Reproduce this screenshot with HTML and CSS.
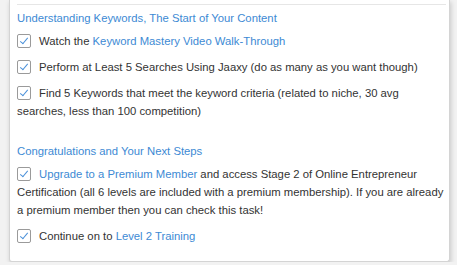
FILE: index.html
```html
<!DOCTYPE html>
<html lang="en">
<head>
  <meta charset="UTF-8" />
  <meta name="viewport" content="width=device-width, initial-scale=1.0" />
  <title>Training Tasks</title>
  <link rel="stylesheet" href="styles.css">
</head>
<body>
  <div class="popup">
    <div class="divider"></div>

    <div class="task-group">
      <div class="group-title">Understanding Keywords, The Start of Your Content</div>
      <div class="task"><span class="check"></span>Watch the <a href="#">Keyword Mastery Video Walk-Through</a></div>
      <div class="task"><span class="check"></span>Perform at Least 5 Searches Using Jaaxy (do as many as you want though)</div>
      <div class="task"><span class="check"></span>Find 5 Keywords that meet the keyword criteria (related to niche, 30 avg searches, less than 100 competition)</div>
    </div>

    <div class="task-group">
      <div class="group-title">Congratulations and Your Next Steps</div>
      <div class="task"><span class="check"></span><a href="#">Upgrade to a Premium Member</a> and access Stage 2 of Online Entrepreneur Certification (all 6 levels are included with a premium membership). If you are already a premium member then you can check this task!</div>
      <div class="task"><span class="check"></span>Continue on to <a href="#">Level 2 Training</a></div>
    </div>
  </div>
</body>
</html>
```

FILE: styles.css
```css
/* Base */
* {
  margin: 0;
  padding: 0;
  box-sizing: border-box;
}

body {
  background: #f2f2f2;
  font-family: 'Liberation Sans', Arial, sans-serif;
  font-size: 11.3px;
  line-height: 18px;
  color: #333;
  padding-left: 9px;
  overflow: hidden;
}

a {
  color: #3d8ad4;
  text-decoration: none;
}

/* Popup card */
.popup {
  width: 441px;
  background: #fff;
  border: 1px solid #d4d4d4;
  border-top: none;
  border-radius: 0 0 3px 3px;
  box-shadow: 1px 2px 5px rgba(0, 0, 0, 0.18);
  padding: 0 3px 16px 7px;
}

.divider {
  height: 5px;
  border-bottom: 1px solid #e6e6e6;
}

.task-group {
  padding-top: 4px;
}

.task-group + .task-group {
  padding-top: 22px;
}

.group-title {
  color: #3d8ad4;
  margin-bottom: 5px;
}

.task {
  margin-bottom: 8px;
}

.task:last-child {
  margin-bottom: 0;
}

/* Checked box */
.check {
  display: inline-block;
  position: relative;
  width: 14px;
  height: 14px;
  border: 1px solid #9a9a9a;
  border-radius: 2px;
  vertical-align: -3px;
  margin-right: 8px;
}

.check::after {
  content: "";
  position: absolute;
  left: 4px;
  top: 1px;
  width: 3px;
  height: 7px;
  border: solid #4a90d9;
  border-width: 0 1px 1px 0;
  transform: rotate(40deg);
}
```
